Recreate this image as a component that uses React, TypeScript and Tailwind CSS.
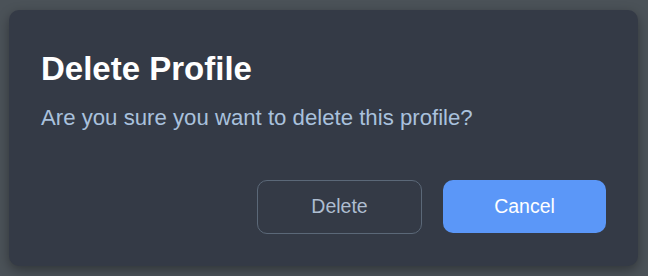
import React from 'react';

const App: React.FC = () => {
  return (
    <div className="w-[648px] h-[276px] bg-[#4b5258] pt-[10px] pl-[9px] overflow-hidden" style={{ fontFamily: '"Liberation Sans", Arial, sans-serif' }}>
      <div className="w-[629px] h-[256px] bg-[#343a46] rounded-[10px] shadow-[0_4px_12px_rgba(0,0,0,0.35)] px-8 pt-[40px] flex flex-col">
        <h2 className="text-[33px] leading-[38px] font-bold text-white">Delete Profile</h2>
        <p className="mt-[17px] text-[22.2px] leading-[26px] text-[#a9c1dd]">Are you sure you want to delete this profile?</p>

        <div className="mt-auto mb-[32px] flex justify-end gap-[21px]">
          <button className="w-[165px] h-[54px] rounded-[10px] border border-[#5b6878] text-[19.5px] text-[#aebdd0]">
            Delete
          </button>
          <button className="w-[163px] h-[53px] rounded-[10px] bg-[#5b97f8] text-[19.5px] text-white">
            Cancel
          </button>
        </div>
      </div>
    </div>
  );
};

export default App;
